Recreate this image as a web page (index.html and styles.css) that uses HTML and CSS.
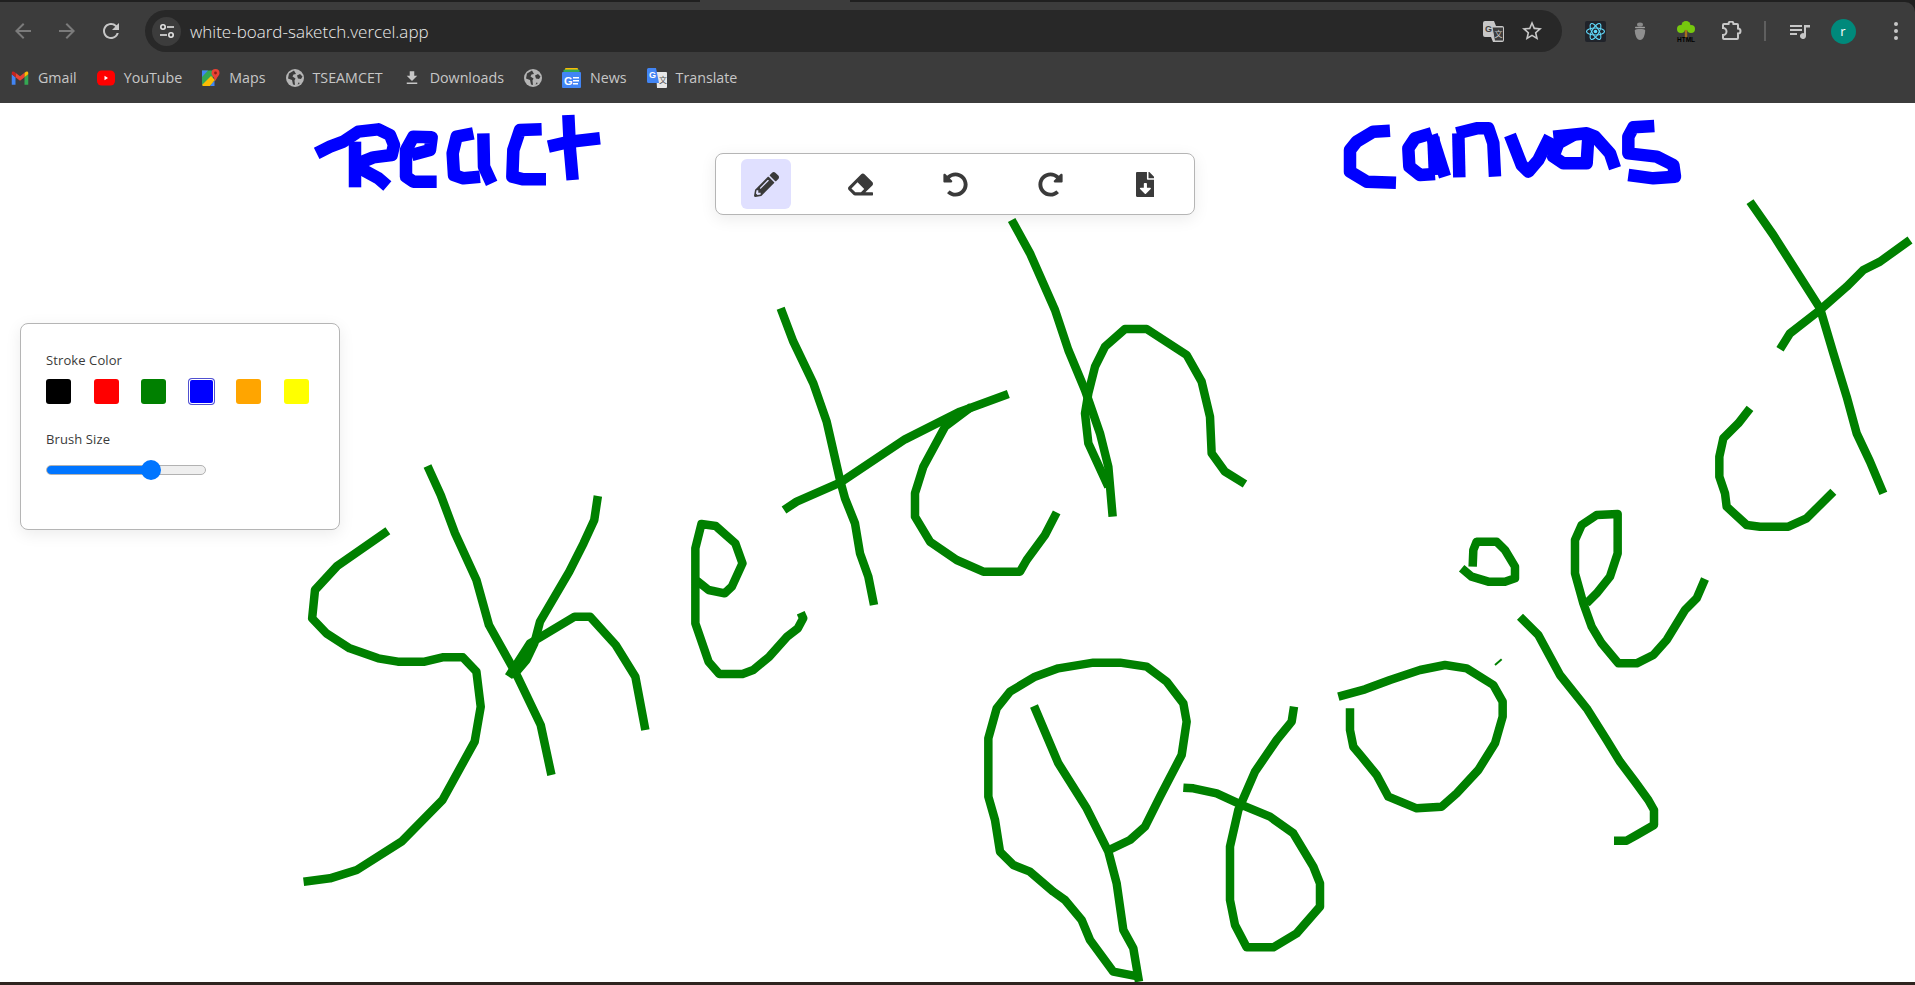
FILE: index.html
```html
<!DOCTYPE html>
<html>
<head>
  <meta charset="UTF-8">
  <title>white-board-saketch</title>
  <link rel="stylesheet" href="styles.css">
</head>
<body>
  <div class="top-strip"><span class="tab-edge"></span></div>

  <header class="toolbar">
    <div class="nav-buttons">
      <svg class="nav-icon dim" viewBox="0 0 24 24"><path d="M20 11H7.83l5.59-5.59L12 4l-8 8 8 8 1.41-1.41L7.83 13H20v-2z"/></svg>
      <svg class="nav-icon dim" viewBox="0 0 24 24"><path d="M12 4l-1.41 1.41L16.17 11H4v2h12.17l-5.58 5.59L12 20l8-8z"/></svg>
      <svg class="nav-icon" viewBox="0 0 24 24"><path d="M17.65 6.35A7.958 7.958 0 0 0 12 4c-4.42 0-7.99 3.58-7.99 8s3.57 8 7.99 8c3.73 0 6.84-2.55 7.73-6h-2.08A5.99 5.99 0 0 1 12 18c-3.31 0-6-2.69-6-6s2.69-6 6-6c1.66 0 3.14.69 4.22 1.78L13 11h7V4l-2.35 2.35z"/></svg>
    </div>
    <div class="address-bar">
      <span class="site-info">
        <svg viewBox="0 0 16 16" width="16" height="16">
          <circle cx="4" cy="4" r="2.2" class="ring"/><path d="M8 4h7" class="line"/>
          <circle cx="12" cy="12" r="2.2" class="ring"/><path d="M1 12h7" class="line"/>
        </svg>
      </span>
      <span class="url">white-board-saketch.vercel.app</span>
      <span class="address-actions">
        <svg class="translate-icon" viewBox="0 0 21 21" width="21" height="21">
          <path d="M2 0h9l2 5h6a2 2 0 0 1 2 2v12a2 2 0 0 1-2 2H10l-2-5H2a2 2 0 0 1-2-2V2a2 2 0 0 1 2-2z" fill="#c7c7c7"/>
          <path d="M9 6h10.500a1 1 0 0 1 1 1v12a1 1 0 0 1-1 1h-8z" fill="#3c3c3c" stroke="#c7c7c7"/>
          <text x="2" y="11" class="mini-g">G</text>
          <text x="11.500" y="16" class="mini-x">文</text>
        </svg>
        <svg class="nav-icon" viewBox="0 0 24 24"><path d="M22 9.240l-7.190-.62L12 2 9.190 8.630 2 9.240l5.460 4.730L5.820 21 12 17.270 18.180 21l-1.630-7.030L22 9.240zM12 15.400l-3.760 2.270 1-4.280-3.320-2.880 4.380-.38L12 6.100l1.710 4.040 4.380.38-3.320 2.880 1 4.280L12 15.400z"/></svg>
      </span>
    </div>
    <div class="extensions">
      <svg class="ext-react" viewBox="0 0 21 21" width="21" height="21">
        <rect width="21" height="21" rx="2" fill="#20232a"/>
        <g fill="none" stroke="#61dafb" stroke-width="1.100">
          <ellipse cx="10.500" cy="10.500" rx="9" ry="3.500"/>
          <ellipse cx="10.500" cy="10.500" rx="9" ry="3.500" transform="rotate(60 10.500 10.500)"/>
          <ellipse cx="10.500" cy="10.500" rx="9" ry="3.500" transform="rotate(120 10.500 10.500)"/>
        </g>
        <circle cx="10.500" cy="10.500" r="1.800" fill="#61dafb"/>
      </svg>
      <svg class="ext-acorn" viewBox="0 0 12 18" width="12" height="18">
        <ellipse cx="6" cy="2.500" rx="3" ry="2" fill="#8a8a8a"/>
        <rect x="1" y="4.800" width="10" height="1.400" rx=".7" fill="#a0a0a0"/>
        <path d="M.8 8C.8 6.500 11.200 6.500 11.200 8c0 5-2 10-5.200 10S.8 13 .8 8z" fill="#8f8f8f"/>
      </svg>
      <svg class="ext-tree" viewBox="0 0 20 21" width="20" height="21">
        <rect x="8.800" y="8" width="2.400" height="9" fill="#a5701c"/>
        <circle cx="10" cy="4.500" r="4.500" fill="#76c80e"/>
        <circle cx="5" cy="8" r="4" fill="#76c80e"/>
        <circle cx="15" cy="8" r="4" fill="#76c80e"/>
        <text x="10" y="20.500" class="mini-html">HTML</text>
      </svg>
      <svg class="ext-puzzle" viewBox="0 0 21 20" width="21" height="20">
        <path d="M3 3h4.500a2.500 2.500 0 0 1 5 0H16a1 1 0 0 1 1 1v3.500a2.500 2.500 0 0 1 0 5V17a1 1 0 0 1-1 1H3a1 1 0 0 1-1-1v-3a3.500 3.500 0 0 0 0-7V4a1 1 0 0 1 1-1z"/>
      </svg>
      <span class="divider"></span>
      <svg class="ext-queue" viewBox="0 0 20 15" width="20" height="15">
        <path d="M0 1h12v2H0zM0 5h12v2H0zM0 9h7v2H0z"/>
        <path d="M14 1h6v2.500h-4V12a3 3 0 1 1-2-2.800z"/>
      </svg>
      <span class="avatar">r</span>
      <span class="menu-dots"><i></i><i></i><i></i></span>
    </div>
  </header>

  <nav class="bookmarks">
    <a class="bookmark">
      <svg viewBox="0 0 24 24" width="18" height="18">
        <path fill="#4285f4" d="M1 7v14h5V11z"/><path fill="#34a853" d="M18 11v10h5V7z"/>
        <path fill="#ea4335" d="M6 11l6 4.500 6-4.500V5l-6 4.500L6 5z"/>
        <path fill="#c5221f" d="M1 7l5 4V5L4 3.500A2 2 0 0 0 1 5z"/><path fill="#fbbc04" d="M18 5v6l5-4V5a2 2 0 0 0-3-1.500z"/>
      </svg>
      Gmail
    </a>
    <a class="bookmark">
      <svg viewBox="0 0 18 18" width="18" height="18">
        <rect x="0" y="1.500" width="18" height="15" rx="4.500" fill="#f00"/><path d="M7.500 6.800v4.400L11 9z" fill="#fff"/>
      </svg>
      YouTube
    </a>
    <a class="bookmark">
      <svg viewBox="0 0 18 18" width="18" height="18">
        <path d="M0 1.500h11v15H1.500A1.500 1.500 0 0 1 0 15z" fill="#34a853"/>
        <path d="M0 16l9-9 4 4-5 6H1z" fill="#fbbc04"/>
        <path d="M0 1.500h6L0 8z" fill="#4285f4"/>
        <path d="M9 7l3.500 3.500V17H8l5-6z" fill="#4285f4"/>
        <path d="M13.500 0a4 4 0 0 1 4 4c0 2.500-2.500 4-4 8-1.500-4-4-5.500-4-8a4 4 0 0 1 4-4z" fill="#ea4335"/>
        <circle cx="13.500" cy="4" r="1.400" fill="#8a1f15"/>
      </svg>
      Maps
    </a>
    <a class="bookmark">
      <svg class="globe" viewBox="0 0 18 18" width="18" height="18">
        <circle cx="9" cy="9" r="9"/>
        <path class="land" d="M8 1.500 3 4.500l-1 5 4 1.500 1 4.500 2 .5-.5-4.500 1-2-3-2 1-2 2.500-.5zM14 5l-3 1.500 1 3 3 .5 1.500-2.500zM13 13l-1.500 2.500 2-.5z"/>
      </svg>
      TSEAMCET
    </a>
    <a class="bookmark">
      <svg viewBox="0 0 24 24" width="18" height="18" class="download"><path d="M19 9h-4V3H9v6H5l7 7 7-7zM5 18v2h14v-2H5z"/></svg>
      Downloads
    </a>
    <a class="bookmark">
      <svg class="globe" viewBox="0 0 18 18" width="18" height="18">
        <circle cx="9" cy="9" r="9"/>
        <path class="land" d="M8 1.500 3 4.500l-1 5 4 1.500 1 4.500 2 .5-.5-4.500 1-2-3-2 1-2 2.500-.5zM14 5l-3 1.500 1 3 3 .5 1.500-2.500zM13 13l-1.500 2.500 2-.5z"/>
      </svg>
    </a>
    <a class="bookmark">
      <svg viewBox="0 0 19 20" width="19" height="20">
        <rect x="3" y="0" width="13" height="6" rx="1" fill="#fbbc04"/>
        <rect x="1.500" y="1.500" width="16" height="6" rx="1" fill="#34a853"/>
        <rect x="0" y="4" width="19" height="16" rx="1" fill="#4285f4"/>
        <text x="2" y="16.500" class="mini-news">G</text>
        <path d="M11 9h6v1.600h-6zM11 12h6v1.600h-6zM11 15h5v1.600h-5z" fill="#fff"/>
      </svg>
      News
    </a>
    <a class="bookmark">
      <svg viewBox="0 0 20 20" width="20" height="20">
        <path d="M9 4h10a1 1 0 0 1 1 1v14a1 1 0 0 1-1 1H10z" fill="#e8e8e8"/>
        <path d="M1.500 0H9l3 15H1.500A1.500 1.500 0 0 1 0 13.500v-12A1.500 1.500 0 0 1 1.500 0z" fill="#4285f4"/>
        <text x="2" y="10" class="mini-trans">G</text>
        <text x="12" y="15" class="mini-trans-x">文</text>
      </svg>
      Translate
    </a>
  </nav>

  <main class="board">
    <svg class="drawing" viewBox="0 103 1915 879">
      <g class="ink-blue" transform="translate(280 100) scale(.33333)">
        <polyline points="110,160 150,140 190,125 235,95 295,88 330,105 342,135 335,165 280,172 235,190"/>
        <polyline points="225,125 225,262"/>
        <polyline points="240,205 295,235 322,258"/>
        <polyline points="395,165 450,150 455,112 400,110 378,150 378,230 400,245 470,245"/>
        <polyline points="580,100 530,110 518,160 522,225 550,235 600,230"/>
        <polyline points="610,100 612,200 635,250"/>
        <polyline points="785,88 720,90 700,150 697,230 730,238 798,238"/>
        <polyline points="865,45 870,150 878,240"/>
        <polyline points="805,140 870,125 960,115"/>
      </g>
      <g class="ink-blue" transform="translate(1320 100) scale(.33333)">
        <polyline points="210,92 160,95 110,125 90,150 90,215 140,245 228,248"/>
        <polyline points="335,100 285,115 265,145 268,200 300,225 345,222"/>
        <polyline points="335,105 375,230"/>
        <polyline points="340,110 345,225"/>
        <polyline points="415,100 418,232"/>
        <polyline points="410,100 470,85 505,85 520,130 525,230"/>
        <polyline points="570,105 605,195 625,215 655,180 690,110"/>
        <polyline points="700,110 800,100 825,110 870,160 885,205"/>
        <polyline points="805,110 800,190 730,190 700,170 715,130 760,105"/>
        <polyline points="1003,78 940,82 925,110 925,160 1010,170 1060,195 1065,230 1000,235 925,225"/>
      </g>
      <g class="ink-green" transform="translate(280 440) scale(.35714 .33333)">
        <polyline points="302,272 160,378 98,450 90,535 130,580 195,625 275,655 330,665 405,665 455,652 512,652 550,695 562,800 545,905 455,1080 340,1205 215,1290 140,1315 66,1325"/>
        <polyline points="413,78 450,165 490,280 550,420 585,555 650,680 665,710 730,855 760,1005"/>
        <polyline points="890,168 880,240 850,310 810,395 728,545 712,610 690,660 650,710"/>
        <polyline points="640,710 700,610 825,530 868,530 940,615 995,710 1023,870"/>
        <polyline points="1165,420 1200,450 1245,460 1265,440 1295,370 1275,310 1220,258 1180,252 1163,325 1163,550 1200,665 1230,702 1295,702 1325,690 1370,650 1420,590 1450,565 1465,535 1458,518"/>
      </g>
      <g class="ink-green" transform="translate(760 200) scale(.33333)">
        <polyline points="62,325 100,425 160,550 200,665 240,840 255,895 285,970 300,1060 325,1130 342,1215"/>
        <polyline points="72,930 110,905 240,848 435,718 600,635 745,582"/>
        <polyline points="635,620 555,680 490,800 465,880 465,950 510,1025 590,1080 670,1115 780,1115 800,1080 855,1005 890,937"/>
        <polyline points="755,60 810,160 885,330 925,450 975,570 1020,700 1045,800 1058,950"/>
        <polyline points="1045,860 985,730 975,640 985,580 1005,500 1035,440 1095,387 1160,387 1280,465 1325,545 1350,650 1355,760 1395,815 1455,852"/>
      </g>
      <g class="ink-green" transform="translate(960 640) scale(.33333)">
        <polyline points="222,198 295,370 380,505 445,635 470,730 490,870 520,925 537,1025"/>
        <polyline points="447,630 510,600 555,560 600,470 665,345 680,245 670,190 620,125 560,80 480,68 400,68 295,85 225,110 150,155 110,205 85,295 85,470 105,540 120,635 160,675 210,695 280,755 315,780 365,840 390,900 460,995 537,1010"/>
        <polyline points="1002,200 995,245 950,300 885,395 835,510 810,620 810,780 825,855 860,922 940,922 1010,880 1080,800 1080,730 1060,680 1000,580 930,530 850,497 770,460 700,445 670,443"/>
      </g>
      <g class="ink-green" transform="translate(1320 500) scale(.33333)">
        <polyline points="55,590 135,568 210,540 300,510 375,495 440,505 520,555 548,605 548,650 525,730 475,810 410,880 365,920 290,925 205,890 170,825 125,770 100,740 90,690 90,625"/>
        <polyline points="425,205 455,230 505,245 555,245 585,235 585,200 555,150 530,125 470,125 460,150 458,200"/>
        <polyline class="ink-thin" points="525,495 545,478"/>
        <polyline points="600,350 655,405 720,525 800,625 860,720 900,785 945,845 985,900 1002,930 1002,975 950,1005 920,1022 882,1022"/>
        <polyline points="1155,237 1130,295 1095,330 1040,420 1000,465 950,490 895,490 845,430 815,380 790,310 765,220 765,120 785,75 830,45 893,42 893,160 870,230 830,280 800,310"/>
      </g>
      <g class="ink-green" transform="translate(1600 190) scale(.33333)">
        <polyline points="450,655 415,700 370,745 358,800 358,860 375,910 380,950 440,1005 480,1010 565,1010 620,985 700,905"/>
        <polyline points="450,35 520,135 660,355 700,490 740,620 770,730 810,815 850,910"/>
        <polyline points="540,478 570,430 660,360 740,290 790,240 840,215 930,150"/>
      </g>
    </svg>

    <div class="tools card">
      <button class="tool active">
        <svg viewBox="0 0 512 512"><path d="M497.900 142.100l-46.100 46.100c-4.700 4.700-12.300 4.700-17 0l-111-111c-4.700-4.700-4.700-12.300 0-17l46.100-46.100c18.700-18.700 49.100-18.700 67.900 0l60.100 60.100c18.800 18.700 18.800 49.100 0 67.900zM284.200 99.800L21.600 362.400.4 483.900c-2.900 16.400 11.400 30.600 27.800 27.800l121.500-21.300 262.600-262.600c4.700-4.700 4.700-12.300 0-17l-111-111c-4.800-4.700-12.400-4.700-17.100 0zM124.100 339.900c-5.500-5.500-5.500-14.300 0-19.800l154-154c5.500-5.500 14.300-5.500 19.800 0s5.500 14.300 0 19.800l-154 154c-5.500 5.500-14.300 5.500-19.800 0zM88 424h48v36.300l-64.500 11.300-31.100-31.100L51.700 376H88v48z"/></svg>
      </button>
      <button class="tool">
        <svg viewBox="0 0 512 512"><path d="M497.941 273.941c18.745-18.745 18.745-49.137 0-67.882l-160-160c-18.745-18.745-49.136-18.746-67.883 0l-256 256c-18.745 18.745-18.745 49.137 0 67.882l96 96A48.004 48.004 0 0 0 144 480h356c6.627 0 12-5.373 12-12v-40c0-6.627-5.373-12-12-12H355.883l142.058-142.059zm-302.627-62.627l137.373 137.373L265.373 416H150.628l-80-80 124.686-124.686z"/></svg>
      </button>
      <button class="tool">
        <svg viewBox="0 0 512 512"><path d="M255.545 8c-66.269.119-126.438 26.233-170.860 68.685L48.971 40.971C33.851 25.851 8 36.559 8 57.941V192c0 13.255 10.745 24 24 24h134.059c21.382 0 32.090-25.851 16.971-40.971l-41.750-41.750c30.864-28.899 70.801-44.907 113.230-45.273 92.398-.798 170.283 73.977 169.484 169.442C423.236 348.009 349.816 424 256 424c-41.127 0-79.997-14.678-110.630-41.556-4.743-4.161-11.906-3.908-16.368.553L89.340 422.659c-4.872 4.872-4.631 12.815.482 17.433C133.798 479.813 192.074 504 256 504c136.966 0 247.999-111.033 248-247.998C504.001 119.193 392.354 7.755 255.545 8z"/></svg>
      </button>
      <button class="tool">
        <svg viewBox="0 0 512 512"><path d="M256.455 8c66.269.119 126.437 26.233 170.859 68.685l35.715-35.715C478.149 25.851 504 36.559 504 57.941V192c0 13.255-10.745 24-24 24H345.941c-21.382 0-32.090-25.851-16.971-40.971l41.750-41.750c-30.864-28.899-70.801-44.907-113.230-45.273-92.398-.798-170.283 73.977-169.484 169.442C88.764 348.009 162.184 424 256 424c41.127 0 79.997-14.678 110.629-41.556 4.743-4.161 11.906-3.908 16.368.553l39.662 39.662c4.872 4.872 4.631 12.815-.482 17.433C378.202 479.813 319.926 504 256 504 119.034 504 8.001 392.967 8 256.002 7.999 119.193 119.646 7.755 256.455 8z"/></svg>
      </button>
      <button class="tool">
        <svg viewBox="0 0 384 512"><path d="M224 136V0H24C10.700 0 0 10.700 0 24v464c0 13.300 10.700 24 24 24h336c13.300 0 24-10.700 24-24V160H248c-13.200 0-24-10.800-24-24zm76.450 211.360l-96.420 95.700c-6.650 6.610-17.390 6.610-24.040 0l-96.420-95.700C73.420 337.290 80.540 320 94.820 320H160v-80c0-8.840 7.160-16 16-16h32c8.840 0 16 7.160 16 16v80h65.180c14.280 0 21.400 17.290 11.270 27.360zM377 105L279.100 7c-4.500-4.500-10.600-7-17-7H256v128h128v-6.100c0-6.300-2.500-12.400-7-16.900z"/></svg>
      </button>
    </div>

    <div class="settings card">
      <p class="label">Stroke Color</p>
      <div class="swatches">
        <span class="swatch black"></span>
        <span class="swatch red"></span>
        <span class="swatch green"></span>
        <span class="swatch blue selected"></span>
        <span class="swatch orange"></span>
        <span class="swatch yellow"></span>
      </div>
      <p class="label">Brush Size</p>
      <input class="brush" type="range" min="0" max="100" value="68">
    </div>
  </main>

  <div class="desktop-edge"></div>
</body>
</html>
```

FILE: styles.css
```css
:root {
  --chrome-bg: #3c3c3c;
  --chrome-dark: #202020;
  --omnibox: #282828;
  --chrome-text: #c7c7c7;
  --ink-green: #008000;
  --ink-blue: #0000ff;
  --panel-text: #3a3a3a;
}
* {
  box-sizing: border-box;
}
html, body {
  height: 100%;
}
body {
  margin: 0;
  display: flex;
  flex-direction: column;
  height: 100vh;
  overflow: hidden;
  background-color: var(--chrome-dark);
  font-family: "Open Sans", "Noto Sans", sans-serif;
}
.top-strip {
  height: 2px;
  flex: none;
  background-color: var(--chrome-dark);
}
.tab-edge {
  display: block;
  width: 150px;
  height: 2px;
  margin-left: 700px;
  background-color: var(--chrome-bg);
}

/* browser toolbar */
.toolbar {
  flex: none;
  height: 54px;
  display: flex;
  align-items: center;
  padding: 4px 17px 0 11px;
  background-color: var(--chrome-bg);
  border-top-right-radius: 10px;
}
.nav-buttons {
  display: flex;
  gap: 20px;
  width: 134px;
  flex: none;
}
.nav-icon {
  width: 24px;
  height: 24px;
  fill: var(--chrome-text);
  flex: none;
}
.nav-icon.dim {
  fill: #7b7b7b;
}
.address-bar {
  width: 1417px;
  height: 42px;
  flex: none;
  display: flex;
  align-items: center;
  padding: 0 18px 0 7px;
  border-radius: 21px;
  background-color: var(--omnibox);
}
.site-info {
  width: 29px;
  height: 29px;
  flex: none;
  display: flex;
  align-items: center;
  justify-content: center;
  border-radius: 50%;
  background-color: var(--chrome-bg);
}
.ring {
  fill: none;
  stroke: #e3e3e3;
  stroke-width: 1.6;
}
.line {
  stroke: #e3e3e3;
  stroke-width: 1.6;
}
.url {
  margin-left: 9px;
  font-size: 17px;
  font-weight: 300;
  color: #ececec;
  white-space: nowrap;
}
.address-actions {
  margin-left: auto;
  display: flex;
  align-items: center;
  gap: 16px;
}
.mini-g {
  font: bold 9px "Liberation Sans", sans-serif;
  fill: #3c3c3c;
}
.mini-x {
  font: 8px "Noto Sans CJK SC", sans-serif;
  fill: #c7c7c7;
}
.extensions {
  display: flex;
  align-items: center;
  margin-left: 23px;
  flex: 1;
}
.ext-acorn {
  margin-left: 28px;
}
.ext-tree {
  margin-left: 30px;
}
.mini-html {
  font: bold 6.5px "Liberation Sans", sans-serif;
  fill: #000;
  text-anchor: middle;
}
.ext-puzzle {
  margin-left: 25px;
}
.ext-puzzle path {
  fill: none;
  stroke: var(--chrome-text);
  stroke-width: 2;
}
.divider {
  width: 1.5px;
  height: 20px;
  margin-left: 22px;
  background-color: #5f5f5f;
}
.ext-queue {
  margin-left: 24px;
  fill: var(--chrome-text);
}
.avatar {
  width: 25px;
  height: 25px;
  margin-left: 21px;
  display: flex;
  align-items: center;
  justify-content: center;
  border-radius: 50%;
  background-color: #00897b;
  color: #fff;
  font-size: 13px;
}
.menu-dots {
  margin-left: auto;
  display: flex;
  flex-direction: column;
  gap: 3px;
}
.menu-dots i {
  width: 4px;
  height: 4px;
  border-radius: 50%;
  background-color: var(--chrome-text);
}

/* bookmarks bar */
.bookmarks {
  flex: none;
  height: 47px;
  display: flex;
  align-items: center;
  gap: 20px;
  padding: 0 0 4px 11px;
  background-color: var(--chrome-bg);
}
.bookmark {
  display: flex;
  align-items: center;
  gap: 9px;
  font-size: 14.25px;
  color: var(--chrome-text);
  white-space: nowrap;
}
.globe circle {
  fill: #b5b5b5;
}
.globe .land {
  fill: #3c3c3c;
}
.download {
  fill: var(--chrome-text);
}
.mini-news {
  font: bold 11px "Liberation Sans", sans-serif;
  fill: #fff;
}
.mini-trans {
  font: bold 9px "Liberation Sans", sans-serif;
  fill: #fff;
}
.mini-trans-x {
  font: 8px "Noto Sans CJK SC", sans-serif;
  fill: #555;
}

/* the drawing board */
.board {
  position: relative;
  flex: 1;
  background-color: #fff;
  overflow: hidden;
}
.drawing {
  position: absolute;
  top: 0;
  left: 0;
  width: 1915px;
  height: 879px;
}
.drawing polyline {
  fill: none;
  stroke-linecap: butt;
  stroke-linejoin: round;
  vector-effect: non-scaling-stroke;
}
.ink-green polyline {
  stroke: var(--ink-green);
  stroke-width: 8.5px;
}
.ink-blue polyline {
  stroke: var(--ink-blue);
  stroke-width: 12.5px;
}
.ink-green .ink-thin {
  stroke-width: 2px;
}
.desktop-edge {
  flex: none;
  height: 3px;
  background-color: #2e241f;
}

.card {
  position: absolute;
  background-color: #fff;
  border: 1px solid #b5b5b5;
  border-radius: 8px;
  box-shadow: 0 4px 16px rgba(0, 0, 0, 0.08);
}
.tools {
  top: 50px;
  left: 715px;
  display: flex;
  gap: 44.75px;
  padding: 5px 24px 5px 25px;
}
.tool {
  width: 50px;
  height: 50px;
  display: flex;
  align-items: center;
  justify-content: center;
  padding: 0;
  border: none;
  border-radius: 6px;
  background: none;
}
.tool.active {
  background-color: #e0e0ff;
}
.tool svg {
  height: 25px;
  fill: #3a3a3a;
}
.settings {
  top: 220px;
  left: 20px;
  width: 320px;
  height: 207px;
  padding: 27px 25px;
}
.label {
  margin: 0;
  font-size: 13px;
  line-height: 18px;
  letter-spacing: .1px;
  color: var(--panel-text);
}
.swatches {
  display: flex;
  gap: 22.5px;
  margin: 10px 0 26px;
}
.swatch {
  width: 25px;
  height: 25px;
  border-radius: 3px;
}
.black { background-color: #000; }
.red { background-color: #f00; }
.green { background-color: #008000; }
.blue { background-color: #00f; }
.orange { background-color: #ffa500; }
.yellow { background-color: #ff0; }
.swatch.selected {
  box-shadow: 0 0 0 1px #fff inset, 0 0 0 1px #5050d0;
}
.brush {
  -webkit-appearance: none;
  appearance: none;
  display: block;
  width: 160px;
  height: 20px;
  margin: 12px 0 0;
  background: none;
}
.brush::-webkit-slider-runnable-track {
  height: 10px;
  border: 1px solid #b2b2b2;
  border-radius: 5px;
  background: linear-gradient(to right, #0075ff 105px, #efefef 105px);
}
.brush::-webkit-slider-thumb {
  -webkit-appearance: none;
  width: 20px;
  height: 20px;
  margin-top: -6px;
  border-radius: 50%;
  background-color: #0075ff;
}
```
